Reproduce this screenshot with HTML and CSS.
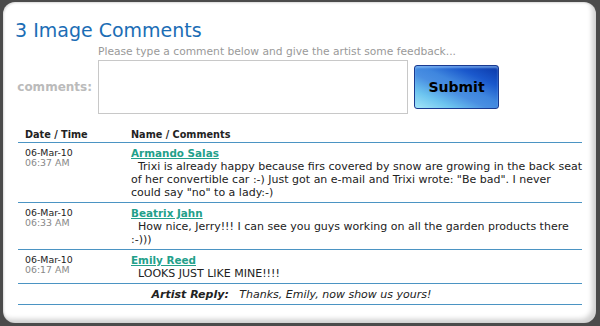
FILE: index.html
```html
<!DOCTYPE html>
<html lang="en">
<head>
  <meta charset="UTF-8">
  <title>Image Comments</title>
  <link rel="stylesheet" href="styles.css">
</head>
<body>

<div class="panel">
  <h2 class="title">3 Image Comments</h2>

  <form class="comment-form">
    <div class="hint">Please type a comment below and give the artist some feedback...</div>
    <label class="form-label" for="comments">comments:</label>
    <div class="form-input">
      <textarea id="comments" class="comment-box"></textarea>
      <button type="button" class="submit-btn">Submit</button>
    </div>
  </form>

  <table class="comments">
    <tr>
      <th class="col-date">Date / Time</th>
      <th>Name / Comments</th>
    </tr>
    <tr>
      <td class="col-date"><div class="date">06-Mar-10</div><div class="time">06:37 AM</div></td>
      <td><a class="name" href="#">Armando Salas</a><div class="text">&nbsp;&nbsp;Trixi is already happy because firs covered by snow are growing in the back seat of her convertible car :-) Just got an e-mail and Trixi wrote: "Be bad". I never could say "no" to a lady:-)</div></td>
    </tr>
    <tr>
      <td class="col-date"><div class="date">06-Mar-10</div><div class="time">06:33 AM</div></td>
      <td><a class="name" href="#">Beatrix Jahn</a><div class="text">&nbsp;&nbsp;How nice, Jerry!!! I can see you guys working on all the garden products there :-)))</div></td>
    </tr>
    <tr>
      <td class="col-date"><div class="date">06-Mar-10</div><div class="time">06:17 AM</div></td>
      <td><a class="name" href="#">Emily Reed</a><div class="text">&nbsp;&nbsp;LOOKS JUST LIKE MINE!!!!</div></td>
    </tr>
    <tr>
      <td colspan="2" class="reply"><b>Artist Reply:</b>&nbsp;&nbsp;&nbsp;Thanks, Emily, now show us yours!</td>
    </tr>
  </table>
</div>

</body>
</html>
```

FILE: styles.css
```css
body {
  margin: 0;
  padding: 2px 4px 3px 3px;
  background-color: #4b4b4b;
  font-family: "DejaVu Sans", Verdana, sans-serif;
}
.panel {
  height: 321px;
  box-sizing: border-box;
  padding: 16px 0 0 12px;
  background-color: #fff;
  border-radius: 12px;
  box-shadow: inset -4px -4px 5px rgba(0, 0, 0, 0.18), inset 1px 1px 2px rgba(0, 0, 0, 0.15);
}
.title {
  margin: 0;
  font-size: 19px;
  line-height: 24px;
  font-weight: normal;
  color: #1b6db5;
}
.comment-form {
  display: grid;
  grid-template-columns: 83px auto;
  margin-top: 4px;
}
.hint {
  grid-column: 2;
  font-size: 10.7px;
  line-height: 12px;
  color: #999;
  margin-bottom: 2px;
}
.form-label {
  align-self: center;
  text-align: right;
  padding-right: 6px;
  font-size: 12px;
  font-weight: bold;
  color: #bbb;
}
.form-input {
  display: flex;
  align-items: center;
  gap: 6px;
}
.comment-box {
  width: 310px;
  height: 54px;
  box-sizing: border-box;
  margin: 0;
  border: 1px solid #c8c8c8;
  resize: none;
}
.submit-btn {
  width: 85px;
  height: 44px;
  border: 1px solid #1a3a90;
  border-radius: 3px;
  background: linear-gradient(25deg, #a4e6f8 0%, #6cc4ef 22%, #4a8fe2 42%, #3f86de 55%, #1a58cc 75%, #0a36a6 100%);
  box-shadow: inset 0 2px 2px rgba(150, 200, 250, 0.6);
  font-family: "DejaVu Sans", Verdana, sans-serif;
  font-size: 14px;
  font-weight: 900;
  color: #000;
}
.comments {
  width: 564px;
  margin: 10px 0 0 3px;
  border-collapse: collapse;
  font-size: 11px;
  line-height: 13px;
}
th, td {
  padding: 4px 0 3px 7px;
  text-align: left;
  vertical-align: top;
  border-bottom: 1px solid #4b94c3;
}
th {
  padding-bottom: 1px;
  font-size: 9.7px;
  font-weight: bold;
  color: #222;
}
.col-date {
  width: 99px;
}
.date, .time {
  line-height: 10px;
  padding-top: 1px;
  font-size: 9.4px;
}
.date {
  color: #222;
}
.time {
  padding-top: 0;
  color: #888;
}
.name {
  font-size: 10.4px;
  font-weight: bold;
  color: #22a08a;
}
.text {
  color: #222;
}
.reply {
  text-align: center;
  font-style: italic;
  color: #222;
  padding-right: 24px;
}
```
